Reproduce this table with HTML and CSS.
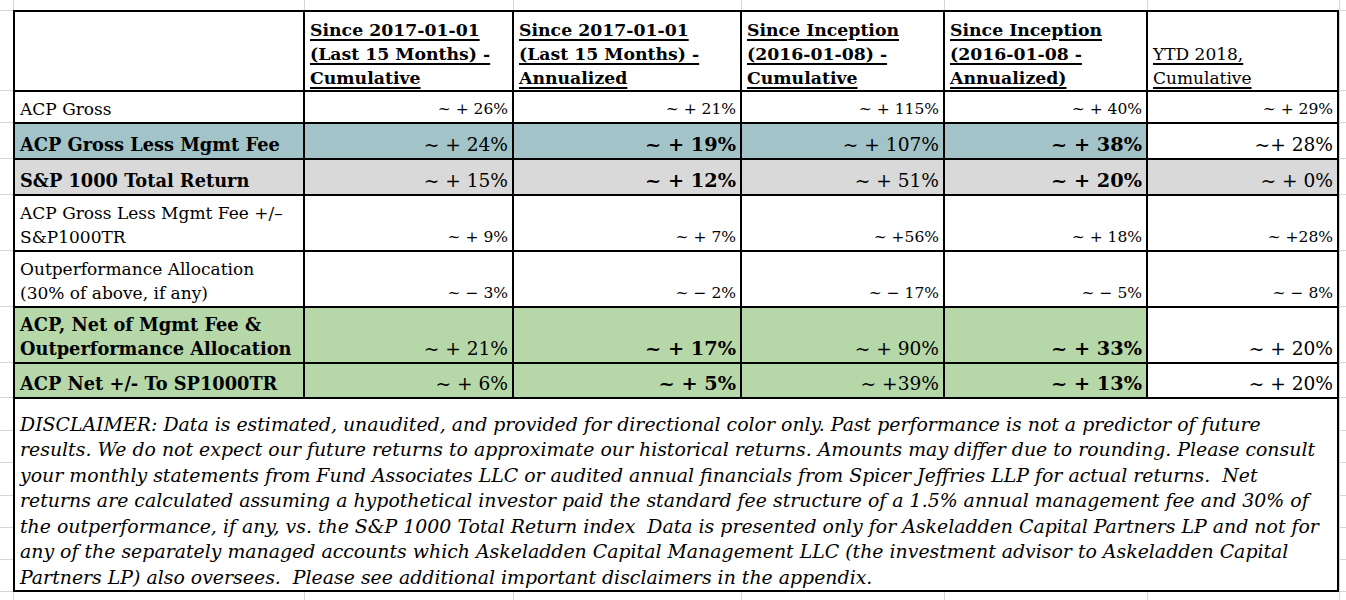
FILE: index.html
```html
<!DOCTYPE html>
<html lang="en">
<head>
<meta charset="utf-8">
<title>ACP Performance Summary</title>
<link rel="stylesheet" href="styles.css">
</head>
<body>
<div class="perf">
  <!-- header -->
  <div class="c hd"></div>
  <div class="c hd"><span class="u">Since 2017-01-01<br>(Last 15 Months) -<br>Cumulative</span></div>
  <div class="c hd"><span class="u">Since 2017-01-01<br>(Last 15 Months) -<br>Annualized</span></div>
  <div class="c hd"><span class="u">Since Inception<br>(2016-01-08) -<br>Cumulative</span></div>
  <div class="c hd"><span class="u">Since Inception<br>(2016-01-08 -<br>Annualized)</span></div>
  <div class="c hd plain"><span class="u">YTD 2018,<br>Cumulative</span></div>

  <!-- ACP Gross -->
  <div class="c lbl">ACP Gross</div>
  <div class="c n">~ + 26%</div>
  <div class="c n">~ + 21%</div>
  <div class="c n">~ + 115%</div>
  <div class="c n">~ + 40%</div>
  <div class="c n">~ + 29%</div>

  <!-- ACP Gross Less Mgmt Fee -->
  <div class="c lbl strong teal">ACP Gross Less Mgmt Fee</div>
  <div class="c n lg teal">~ + 24%</div>
  <div class="c n bd teal">~ + 19%</div>
  <div class="c n lg teal">~ + 107%</div>
  <div class="c n bd teal">~ + 38%</div>
  <div class="c n lg">~+ 28%</div>

  <!-- S&P 1000 -->
  <div class="c lbl strong grey">S&amp;P 1000 Total Return</div>
  <div class="c n lg grey">~ + 15%</div>
  <div class="c n bd grey">~ + 12%</div>
  <div class="c n lg grey">~ + 51%</div>
  <div class="c n bd grey">~ + 20%</div>
  <div class="c n lg grey">~ + 0%</div>

  <!-- Gross less fee vs index -->
  <div class="c lbl">ACP Gross Less Mgmt Fee +/– S&amp;P1000TR</div>
  <div class="c n">~ + 9%</div>
  <div class="c n">~ + 7%</div>
  <div class="c n">~ +56%</div>
  <div class="c n">~ + 18%</div>
  <div class="c n">~ +28%</div>

  <!-- Outperformance allocation -->
  <div class="c lbl">Outperformance Allocation<br>(30% of above, if any)</div>
  <div class="c n">~ − 3%</div>
  <div class="c n">~ − 2%</div>
  <div class="c n">~ − 17%</div>
  <div class="c n">~ − 5%</div>
  <div class="c n">~ − 8%</div>

  <!-- ACP net -->
  <div class="c lbl strong green">ACP, Net of Mgmt Fee &amp;<br>Outperformance Allocation</div>
  <div class="c n lg green">~ + 21%</div>
  <div class="c n bd green">~ + 17%</div>
  <div class="c n lg green">~ + 90%</div>
  <div class="c n bd green">~ + 33%</div>
  <div class="c n lg">~ + 20%</div>

  <!-- ACP net vs index -->
  <div class="c lbl strong green">ACP Net +/- To SP1000TR</div>
  <div class="c n lg green">~ + 6%</div>
  <div class="c n bd green">~ + 5%</div>
  <div class="c n lg green">~ +39%</div>
  <div class="c n bd green">~ + 13%</div>
  <div class="c n lg">~ + 20%</div>

  <!-- disclaimer -->
  <div class="c disc">DISCLAIMER: Data is estimated, unaudited, and provided for directional color only. Past performance is not a predictor of future results. We do not expect our future returns to approximate our historical returns. Amounts may differ due to rounding. Please consult your monthly statements from Fund Associates LLC or audited annual financials from Spicer Jeffries LLP for actual returns.&nbsp; Net returns are calculated assuming a hypothetical investor paid the standard fee structure of a 1.5% annual management fee and 30% of the outperformance, if any, vs. the S&amp;P 1000 Total Return index&nbsp; Data is presented only for Askeladden Capital Partners LP and not for any of the separately managed accounts which Askeladden Capital Management LLC (the investment advisor to Askeladden Capital Partners LP) also oversees.&nbsp; Please see additional important disclaimers in the appendix.</div>
</div>
</body>
</html>
```

FILE: styles.css
```css
html {
  height: 100%;
}

body {
  margin: 0;
  min-height: 100%;
  color: #000;
  font-family: "DejaVu Serif", "Liberation Serif", serif;
  background-color: #fff;
  /* spreadsheet gridlines visible around the bordered range */
  background-image:
    linear-gradient(#d6d6d6, #d6d6d6),
    linear-gradient(#d6d6d6, #d6d6d6),
    linear-gradient(#d6d6d6, #d6d6d6),
    linear-gradient(#d6d6d6, #d6d6d6),
    linear-gradient(#d6d6d6, #d6d6d6),
    linear-gradient(#d6d6d6, #d6d6d6),
    linear-gradient(#d6d6d6, #d6d6d6),
    linear-gradient(#d6d6d6, #d6d6d6),
    linear-gradient(#d6d6d6, #d6d6d6),
    linear-gradient(#d6d6d6, #d6d6d6),
    linear-gradient(#d6d6d6, #d6d6d6),
    linear-gradient(#d6d6d6, #d6d6d6),
    linear-gradient(#d6d6d6, #d6d6d6),
    linear-gradient(#d6d6d6, #d6d6d6),
    linear-gradient(#d6d6d6, #d6d6d6),
    linear-gradient(#d6d6d6, #d6d6d6),
    linear-gradient(#d6d6d6, #d6d6d6),
    linear-gradient(#d6d6d6, #d6d6d6),
    linear-gradient(#d6d6d6, #d6d6d6),
    linear-gradient(#d6d6d6, #d6d6d6),
    linear-gradient(#d6d6d6, #d6d6d6),
    linear-gradient(#d6d6d6, #d6d6d6);
  background-repeat: no-repeat;
  background-size:
    1px 100%, 1px 100%, 1px 100%, 1px 100%, 1px 100%, 1px 100%, 1px 100%,
    100% 1px, 100% 1px, 100% 1px, 100% 1px, 100% 1px, 100% 1px, 100% 1px, 100% 1px,
    100% 1px, 100% 1px, 100% 1px, 100% 1px, 100% 1px, 100% 1px, 100% 1px;
  background-position:
    13px 0, 304px 0, 513px 0, 741px 0, 944px 0, 1147px 0, 1339px 0,
    0 10px, 0 90px, 0 122px, 0 158px, 0 194px, 0 250px, 0 306px, 0 362px,
    0 397px, 0 430px, 0 462px, 0 495px, 0 527px, 0 559px, 0 591px;
}

.perf {
  display: grid;
  grid-template-columns: 290px 209px 228px 203px 203px 191px;
  grid-template-rows: 80px 32px 36px 36px 56px 56px 56px 35px 193px;
  width: 1326px;
  box-sizing: border-box;
  margin: 10px 0 0 13px;
  border-left: 2px solid #000;
  border-top: 2px solid #000;
}

.c {
  box-sizing: border-box;
  display: flex;
  flex-direction: column;
  justify-content: flex-end;
  border-right: 2px solid #000;
  border-bottom: 2px solid #000;
  background: #fff;
  padding: 0 4px 0 5px;
  font-size: 17px;
  line-height: 24px;
  white-space: normal;
}

.hd {
  font-size: 17.3px;
  font-weight: bold;
}

.hd.plain {
  font-size: 17px;
  font-weight: normal;
}

.u {
  text-decoration: underline;
  text-decoration-thickness: 1.5px;
  text-underline-offset: 3px;
  white-space: nowrap;
}

.lbl {
  text-align: left;
  padding-bottom: 1px;
}

.strong {
  font-size: 17.8px;
  font-weight: bold;
}

.n {
  text-align: right;
  font-size: 15.5px;
  padding-bottom: 1px;
  white-space: nowrap;
}

.n.lg {
  font-size: 18.6px;
}

.n.bd {
  font-size: 19.3px;
  font-weight: bold;
}

.teal {
  background: #a2c4c9;
}

.grey {
  background: #d9d9d9;
}

.green {
  background: #b6d7a8;
}

.disc {
  grid-column: 1 / span 6;
  padding: 0 7px 0 5px;
  font-size: 18.9px;
  line-height: 25.5px;
  font-style: italic;
}
```
